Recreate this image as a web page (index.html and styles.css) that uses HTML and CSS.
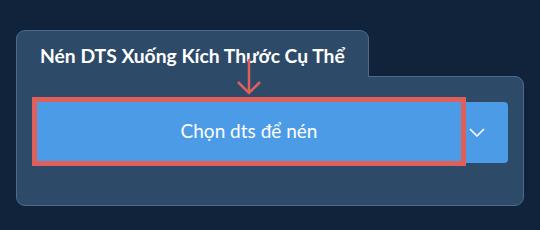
FILE: index.html
```html
<!DOCTYPE html>
<html lang="vi">
<head>
    <meta charset="UTF-8">
    <meta name="viewport" content="width=device-width, initial-scale=1.0">
    <title>Nén DTS</title>
    <link rel="stylesheet" href="styles.css">
</head>
<body>
    <div class="widget">
        <div class="tab">Nén DTS Xuống Kích Thước Cụ Thể</div>
        <div class="panel">
            <div class="btn-group">
                <button class="main-btn">Chọn dts để nén</button>
                <button class="drop-btn">
                    <svg width="16" height="9" viewBox="0 0 16 9">
                        <polyline points="1,1 8,8 15,1" fill="none" stroke="#fff" stroke-width="1.6"/>
                    </svg>
                </button>
            </div>
        </div>
        <svg class="hint-arrow" width="26" height="38" viewBox="0 0 26 38">
            <line x1="13" y1="1" x2="13" y2="35" stroke="#df5f5b" stroke-width="2.5"/>
            <polyline points="2,24 13,35 24,24" fill="none" stroke="#df5f5b" stroke-width="2.5"/>
        </svg>
    </div>
</body>
</html>
```

FILE: styles.css
```css
body {
    margin: 0;
    background-color: #11233a;
    font-family: Lato, "Noto Sans", sans-serif;
    height: 230px;
}

.widget {
    position: relative;
    padding: 30px 0 0 16px;
}

.tab {
    position: relative;
    z-index: 1;
    box-sizing: border-box;
    width: 353px;
    height: 47px;
    margin-bottom: -1px;
    padding: 13px 0 0 23px;
    background-color: #2d4a69;
    border: 1px solid #4d6a8c;
    border-bottom: none;
    border-radius: 9px 9px 0 0;
    color: #fff;
    font-size: 19.3px;
    font-weight: bold;
    white-space: nowrap;
}

.panel {
    box-sizing: border-box;
    width: 508px;
    height: 130px;
    padding: 25px 15px 0 20px;
    background-color: #2d4a69;
    border: 1px solid #4d6a8c;
    border-radius: 0 9px 9px 9px;
}

.btn-group {
    display: flex;
    align-items: flex-start;
    gap: 5px;
}

.main-btn {
    width: 424px;
    height: 59px;
    background-color: #4b9be6;
    color: #fff;
    border: none;
    outline: 5px solid #df5f5b;
    border-radius: 0;
    font-family: Lato, "Noto Sans", sans-serif;
    font-size: 19px;
    font-weight: normal;
    padding: 0 0 2px;
    cursor: pointer;
}

.drop-btn {
    display: flex;
    justify-content: center;
    align-items: center;
    width: 42px;
    height: 61px;
    padding: 0 21px 0 0;
    background-color: #4b9be6;
    border: none;
    border-radius: 0 4px 4px 0;
    cursor: pointer;
}

.hint-arrow {
    position: absolute;
    left: 236px;
    top: 58px;
    z-index: 2;
}
```
